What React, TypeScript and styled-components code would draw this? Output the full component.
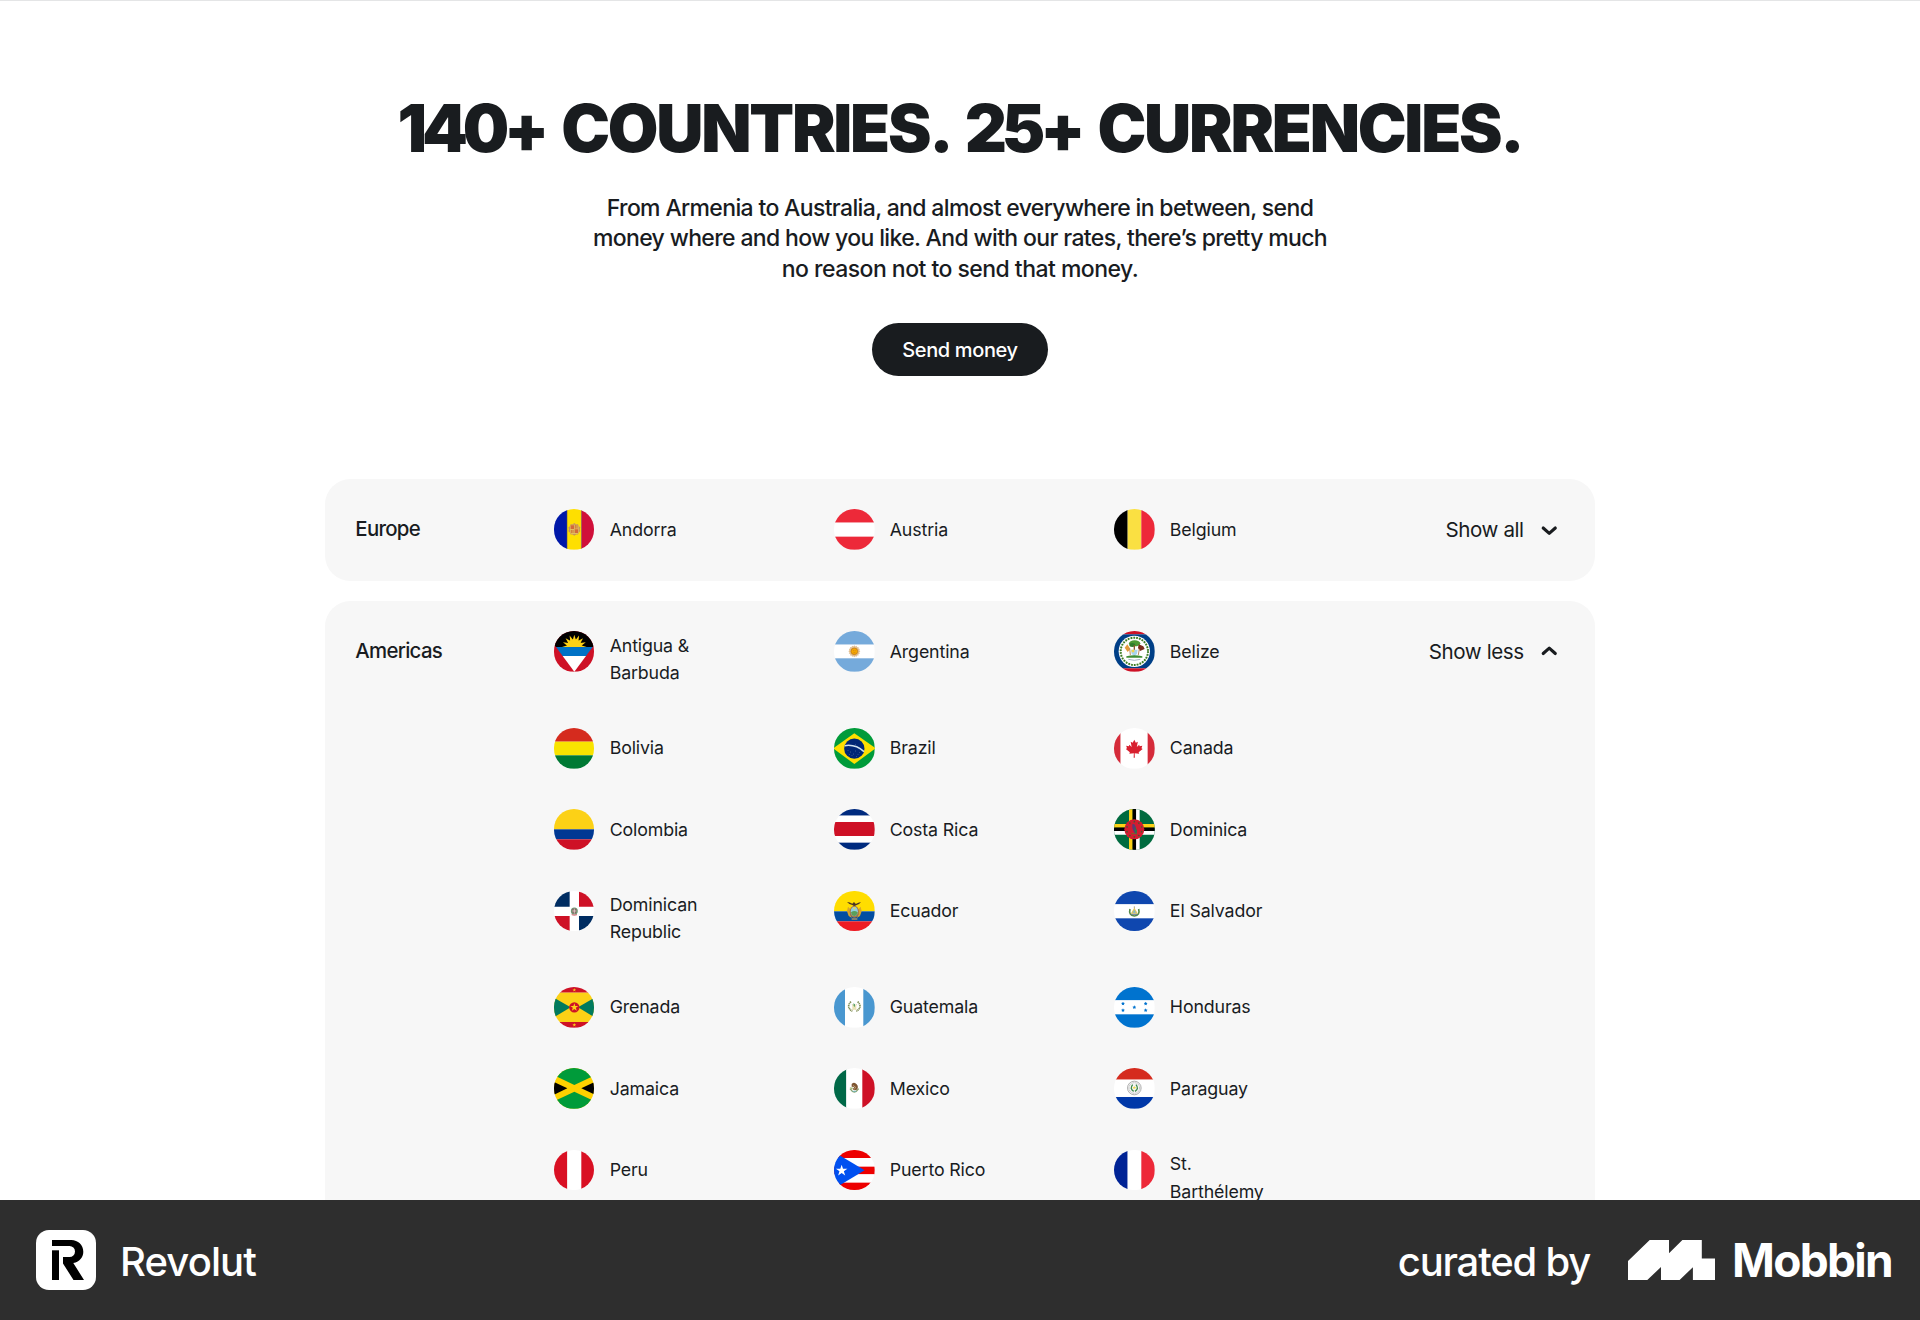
import React from 'react';
import styled, { createGlobalStyle } from 'styled-components';

const GlobalStyle = createGlobalStyle`
  *, *::before, *::after { box-sizing: border-box; }
  body { margin: 0; background: #fff; color: #191c1f; font-family: Inter, "Liberation Sans", sans-serif; }
  h1, h2, p, ul { margin: 0; padding: 0; }
`;

const Page = styled.div`
  display: flex;
  flex-direction: column;
  width: 1920px;
  height: 1320px;
  overflow: hidden;
`;

const Main = styled.main`
  flex: 1;
  min-height: 0;
  overflow: hidden;
  display: flex;
  flex-direction: column;
  align-items: center;
  border-top: 1px solid #e4e5e6;
`;

const Title = styled.h1`
  margin-top: 88px;
  font-size: 65.4px;
  line-height: 80px;
  font-weight: 900;
  letter-spacing: -2.25px;
  word-spacing: 6.3px;
  white-space: nowrap;
`;

const Figure = styled.span`
  letter-spacing: -5.2px;
`;

const Lead = styled.p`
  margin-top: 23.6px;
  text-align: center;
  font-size: 23px;
  line-height: 30.5px;
  font-weight: 500;
`;

const LeadLine = styled.span<{ $spacing: number }>`
  display: block;
  letter-spacing: ${(p) => p.$spacing}px;
`;

const SendButton = styled.button`
  margin-top: 39.4px;
  width: 176.5px;
  height: 53px;
  flex-shrink: 0;
  border: 0;
  border-radius: 27px;
  background: #191c1f;
  color: #fff;
  font: 500 20px/53px Inter, "Liberation Sans", sans-serif;
  letter-spacing: -0.36px;
  padding: 1px 0 0;
`;

const Regions = styled.div`
  margin-top: 102.5px;
  width: 1269.4px;
  display: flex;
  flex-direction: column;
  gap: 20.3px;
`;

const Card = styled.section<{ $open?: boolean }>`
  display: grid;
  grid-template-columns: 198px 1fr auto;
  align-items: start;
  flex-shrink: 0;
  min-height: ${(p) => (p.$open ? '760px' : '101.6px')};
  padding: 30.5px;
  border-radius: 25.4px;
  background: #f7f7f7;
`;

const RegionName = styled.h2`
  font-size: 20.4px;
  font-weight: 500;
  line-height: 40.6px;
  letter-spacing: -0.7px;
  margin-left: -0.5px;
`;

const CountryGrid = styled.ul`
  display: grid;
  grid-template-columns: repeat(3, 280.1px);
  row-gap: 40.67px;
  width: 800px;
  list-style: none;
`;

const Country = styled.li`
  display: flex;
  gap: 15.2px;
  align-items: flex-start;
`;

const FlagSvg = styled.svg`
  width: 40.67px;
  height: 40.67px;
  flex-shrink: 0;
  border-radius: 50%;
  display: block;
`;

const CountryName = styled.span`
  display: flex;
  align-items: center;
  width: 112px;
  min-height: 40.67px;
  font-size: 17.8px;
  line-height: 27.8px;
  letter-spacing: -0.14px;
  padding-top: 0.2px;
`;

const Toggle = styled.button`
  display: flex;
  align-items: center;
  gap: 10px;
  height: 40.6px;
  padding: 0;
  border: 0;
  background: none;
  color: #191c1f;
  font: 400 20.6px/40px Inter, "Liberation Sans", sans-serif;
  letter-spacing: -0.42px;
  white-space: nowrap;
`;

const ChevronSvg = styled.svg<{ $up?: boolean }>`
  width: 30.5px;
  height: 30.5px;
  transform: ${(p) => (p.$up ? 'rotate(180deg)' : 'none')};
`;

const Footer = styled.footer`
  height: 120px;
  flex-shrink: 0;
  display: flex;
  align-items: center;
  justify-content: space-between;
  padding: 0 28px 0 36px;
  background: #2e2e2e;
  color: #fff;
`;

const Brand = styled.div`
  display: flex;
  align-items: center;
`;

const AppTile = styled.svg`
  width: 60px;
  height: 60px;
  margin-right: 24px;
`;

const BrandName = styled.span<{ $spacing: number }>`
  font-size: 40px;
  line-height: 60px;
  font-weight: 500;
  letter-spacing: ${(p) => p.$spacing}px;
  padding-top: 3px;
`;

const MobbinMark = styled.svg`
  width: 87px;
  height: 40px;
  margin: 0 17px 0 38px;
`;

const MobbinName = styled.span`
  font-size: 46px;
  line-height: 60px;
  font-weight: 700;
  letter-spacing: -1.7px;
`;

/* Flags share a 122-unit square and are clipped to a circle by FlagSvg. */
const Bars = ({ colors, stops, vertical }: { colors: string[]; stops: number[]; vertical?: boolean }) => (
  <>
    {colors.map((c, i) => {
      const a = i === 0 ? 0 : stops[i - 1];
      const b = i === colors.length - 1 ? 122 : stops[i];
      return vertical ? (
        <rect key={i} x={a} y={0} width={b - a} height={122} fill={c} />
      ) : (
        <rect key={i} x={0} y={a} width={122} height={b - a} fill={c} />
      );
    })}
  </>
);

const starPoints = (cx: number, cy: number, r: number, n = 5, inner = 0.382) =>
  Array.from({ length: n * 2 }, (_, i) => {
    const rad = i % 2 ? r * inner : r;
    const a = (Math.PI * i) / n - Math.PI / 2;
    return `${(cx + rad * Math.cos(a)).toFixed(2)},${(cy + rad * Math.sin(a)).toFixed(2)}`;
  }).join(' ');

const Star = ({ x, y, r, fill, n, inner }: { x: number; y: number; r: number; fill: string; n?: number; inner?: number }) => (
  <polygon points={starPoints(x, y, r, n, inner)} fill={fill} />
);

const flags: Record<string, React.ReactNode> = {
  Andorra: (
    <>
      <Bars vertical colors={['#0018a8', '#fedf00', '#d0103a']} stops={[39, 82]} />
      <path d="M39.5 0V122M82.5 0V122" stroke="#7b6a50" strokeWidth="1.6" />
      <Star x={61} y={61} r={19} n={10} inner={0.86} fill="#c7955a" />
      <rect x="48" y="47" width="26" height="28" rx="6" fill="#e0bd62" />
      <path d="M50 49h10v11H50zM62 61h10v11H62z" fill="#d2683a" />
      <path d="M64 48v11M69 48v11M52 63v9M57 63v9" stroke="#c8501f" strokeWidth="2" />
    </>
  ),
  Austria: <Bars colors={['#ed2939', '#fff', '#ed2939']} stops={[41, 83]} />,
  Belgium: <Bars vertical colors={['#000', '#fae042', '#ed2939']} stops={[41, 82]} />,
  'Antigua & Barbuda': (
    <>
      <rect width="122" height="122" fill="#ce1126" />
      <polygon points="0,0 122,0 122,42 116,48 6,48 0,42" fill="#000" />
      <g transform="translate(61 48)">
        <circle r="23" fill="#fcd116" />
        {[-90, -67.5, -45, -22.5, 0, 22.5, 45, 67.5, 90].map((a) => (
          <polygon key={a} points="-5,-20 0,-37 5,-20" fill="#fcd116" transform={`rotate(${a})`} />
        ))}
      </g>
      <polygon points="6,48 116,48 96,75 26,75" fill="#0072c6" />
      <polygon points="26,75 96,75 61,122" fill="#fff" />
    </>
  ),
  Argentina: (
    <>
      <Bars colors={['#75aadb', '#fff', '#75aadb']} stops={[41, 82]} />
      <Star x={61} y={61} r={18} n={16} inner={0.82} fill="#e2bf90" />
      <circle cx="61" cy="61" r="10" fill="#f6a800" stroke="#b8711f" strokeWidth="2" />
      <path d="M57 59h3M62 59h3M58 65h6" stroke="#b8711f" strokeWidth="1.5" />
    </>
  ),
  Belize: (
    <>
      <Bars colors={['#ce1126', '#003f87', '#ce1126']} stops={[10, 112]} />
      <circle cx="61" cy="61" r="47" fill="#fff" />
      <circle cx="61" cy="61" r="41" fill="none" stroke="#b9d6ae" strokeWidth="2" />
      <circle cx="61" cy="61" r="41" fill="none" stroke="#3c7a22" strokeWidth="6" strokeDasharray="5 3.6" />
      <ellipse cx="62" cy="37" rx="17" ry="9" fill="#4d9a35" />
      <ellipse cx="55" cy="42" rx="9" ry="6" fill="#2f7d2c" />
      <path d="M61 42v18" stroke="#8b5a2b" strokeWidth="4" />
      <path d="M32 50l8-10 9 14-8 9z" fill="#e39b3b" />
      <path d="M74 40l14 6 4 8-14 6-6-9z" fill="#7b2c1c" />
      <path d="M47 52l2 20M76 54l-3 18" stroke="#b98a5e" strokeWidth="3" />
      <path d="M51 56h20l-2 13-8 6-8-6z" fill="#a9d5ee" />
      <path d="M53 56h8v8h-8z" fill="#f3d34a" />
      <path d="M37 76q24-7 48 0v4H37z" fill="#3f8e34" />
      <path d="M43 85q18 6 36 0" fill="none" stroke="#a8b4c0" strokeWidth="3" />
    </>
  ),
  Bolivia: <Bars colors={['#d52b1e', '#f9e300', '#007934']} stops={[41, 82]} />,
  Brazil: (
    <>
      <rect width="122" height="122" fill="#009b3a" />
      <polygon points="61,16 125,61 61,108 -3,61" fill="#fedf00" />
      <circle cx="61" cy="62" r="30.5" fill="#002776" />
      <path d="M32 53q33-5 58 18" fill="none" stroke="#cfe2ef" strokeWidth="4.5" />
      <g fill="#7f93bb">
        {[[42, 67], [50, 72], [58, 78], [65, 69], [72, 79], [54, 83], [46, 79], [76, 73], [68, 86], [65, 49]].map(([x, y]) => (
          <circle key={`${x}-${y}`} cx={x} cy={y} r="1.2" />
        ))}
      </g>
    </>
  ),
  Canada: (
    <>
      <Bars vertical colors={['#d52b3a', '#fff', '#d52b3a']} stops={[20, 101]} />
      <path
        fill="#d8202f"
        d="M61 35l-5 9.500-6-3 3 15.500-7-7-1.500 4.500-8-1.500 2.500 8-3.500 2 12 9.500-1.500 5 13.500-2-.5 14h3.500l-.5-14 13.500 2-1.500-5 12-9.500-3.500-2 2.500-8-8 1.500-1.500-4.500-7 7 3-15.500-6 3z"
      />
    </>
  ),
  Colombia: <Bars colors={['#fcd116', '#003893', '#ce1126']} stops={[61, 91]} />,
  'Costa Rica': <Bars colors={['#002b7f', '#fff', '#ce1126', '#fff', '#002b7f']} stops={[20, 39, 81, 101]} />,
  Dominica: (
    <>
      <rect width="122" height="122" fill="#006b3f" />
      <path d="M50.500 0V122M0 50.500H122" stroke="#fcd116" strokeWidth="11" />
      <path d="M71.500 0V122M0 71.500H122" stroke="#fff" strokeWidth="11" />
      <path d="M61 0V122M0 61H122" stroke="#000" strokeWidth="10.500" />
      <circle cx="61" cy="61" r="30" fill="#d41c30" />
      {Array.from({ length: 10 }, (_, i) => {
        const a = (i * Math.PI) / 5;
        return <Star key={i} x={61 + 23 * Math.sin(a)} y={61 - 23 * Math.cos(a)} r={4} fill="#38612f" />;
      })}
      <path d="M55 46q7-3 9 5l4 14-1 13-7-8-5-12z" fill="#5b3a78" />
      <path d="M63 52l6 14-2 10-5-10z" fill="#2b7a46" />
      <path d="M52 74h17" stroke="#5c7a2d" strokeWidth="2.500" />
    </>
  ),
  'Dominican Republic': (
    <>
      <rect width="122" height="122" fill="#fff" />
      <path d="M0 0H47V47H0zM75 75H122V122H75z" fill="#002d62" />
      <path d="M75 0H122V47H75zM0 75H47V122H0z" fill="#ce1126" />
      <circle cx="61" cy="60" r="10.500" fill="#6f9a76" />
      <path d="M55 53h12v11l-6 5-6-5z" fill="#8d5e63" />
      <path d="M61 53v15M55 60h12" stroke="#f0efe6" strokeWidth="2" />
      <path d="M53 71q8 3 16 0" fill="none" stroke="#c23645" strokeWidth="2.500" />
    </>
  ),
  Ecuador: (
    <>
      <Bars colors={['#fd0', '#034ea2', '#ed1c24']} stops={[61, 91]} />
      <path d="M39 33q9 1 16 5l4-4 4 1 2 4q8-5 16-6-5 7-13 9l-7 4-6-4q-9-1-16-9z" fill="#4a3425" />
      <path d="M42 47l9 9-2 15 5 10-10-6-5-14zM80 47l-9 9 2 15-5 10 10-6 5-14z" fill="#d7a52b" />
      <ellipse cx="61" cy="62" rx="14" ry="18" fill="#a7784d" />
      <ellipse cx="61" cy="61" rx="10.500" ry="14" fill="#8fcfe0" />
      <path d="M51 64q10-8 20 0-2 11-10 11t-10-11z" fill="#5aa05b" />
      <circle cx="61" cy="52" r="3.500" fill="#f7d744" />
      <path d="M53 84h17" stroke="#a89062" strokeWidth="5" />
    </>
  ),
  'El Salvador': (
    <>
      <Bars colors={['#0f47af', '#fff', '#0f47af']} stops={[40, 82]} />
      <path d="M48 54q-5 19 13 21 18-2 13-21" fill="none" stroke="#568a4a" strokeWidth="5" />
      <polygon points="61,50 72,68 50,68" fill="#e2c75a" />
      <polygon points="61,56 66,65 56,65" fill="#7eb6d6" />
      <path d="M52 70h18" stroke="#5c7894" strokeWidth="3" />
      <path d="M61 46v6" stroke="#937d3e" strokeWidth="2" />
    </>
  ),
  Grenada: (
    <>
      <Bars colors={['#ce1126', '#fcd116', '#ce1126']} stops={[17, 105]} />
      <polygon points="0,32 50,61 0,91" fill="#007a5e" />
      <polygon points="122,32 72,61 122,91" fill="#007a5e" />
      <circle cx="61" cy="61" r="15.500" fill="#ce1126" />
      <Star x={61} y={61} r={12.5} fill="#fcd116" />
      <Star x={61} y={9} r={6} fill="#fcd116" />
      <Star x={61} y={114} r={6} fill="#fcd116" />
    </>
  ),
  Guatemala: (
    <>
      <Bars vertical colors={['#4997d0', '#fff', '#4997d0']} stops={[33, 88]} />
      <path d="M51 44q-16 16 4 29M71 44q16 16-4 29" fill="none" stroke="#7f8f55" strokeWidth="5" strokeDasharray="4 1.500" />
      <path d="M54 51l14 20M68 51L54 71" stroke="#b9a778" strokeWidth="1.500" />
      <path d="M55 53h12v15H55z" fill="#e9e2b4" />
      <path d="M58 49l5 3v8l-4-3z" fill="#58a065" />
    </>
  ),
  Honduras: (
    <>
      <Bars colors={['#0073cf', '#fff', '#0073cf']} stops={[40, 82]} />
      {[[27, 50], [27, 70], [61, 61], [95, 50], [95, 70]].map(([x, y]) => (
        <Star key={`${x}-${y}`} x={x} y={y} r={6} inner={0.5} fill="#0073cf" />
      ))}
    </>
  ),
  Jamaica: (
    <>
      <rect width="122" height="122" fill="#fed100" />
      <polygon points="0,0 122,0 122,22 61,51 0,22" fill="#009b3a" />
      <polygon points="0,122 122,122 122,100 61,71 0,100" fill="#009b3a" />
      <polygon points="0,42 40,61 0,80" fill="#000" />
      <polygon points="122,42 82,61 122,80" fill="#000" />
    </>
  ),
  Mexico: (
    <>
      <Bars vertical colors={['#006847', '#fff', '#ce1126']} stops={[37, 85]} />
      <path d="M48 62q13 20 26 0" fill="none" stroke="#8ba26e" strokeWidth="4" />
      <path d="M53 48q8-8 15 1 6 6 2 15-7 5-14 0l5-7-8-1z" fill="#7d5532" />
      <path d="M47 58l11 1-5 6z" fill="#a8ba76" />
      <path d="M57 52l8 6-5 7" fill="none" stroke="#d5b88b" strokeWidth="2" />
      <path d="M56 70h11" stroke="#67b8c6" strokeWidth="2.500" />
    </>
  ),
  Paraguay: (
    <>
      <Bars colors={['#d52b1e', '#fff', '#0038a8']} stops={[35, 87]} />
      <circle cx="61" cy="60" r="20.500" fill="#f5f5f5" stroke="#8d8d8d" strokeWidth="2" />
      <circle cx="61" cy="60" r="16" fill="none" stroke="#b7b7b7" strokeWidth="3" strokeDasharray="3 2" />
      <path d="M56 50q-10 12 3 20M66 50q10 12-3 20" fill="none" stroke="#3f8a49" strokeWidth="4" />
      <Star x={61} y={59} r={6} fill="#eed84b" />
    </>
  ),
  Peru: <Bars vertical colors={['#d91023', '#fff', '#d91023']} stops={[40, 82]} />,
  'Puerto Rico': (
    <>
      <Bars colors={['#ed0000', '#fff', '#ed0000', '#fff', '#ed0000']} stops={[24, 50, 73, 98]} />
      <polygon points="0,6 92,61 0,116" fill="#0050f0" />
      <Star x={23} y={62} r={18} fill="#fff" />
    </>
  ),
  'St. Barthélemy': <Bars vertical colors={['#002395', '#fff', '#ed2939']} stops={[41, 82]} />,
};

const Chevron = ({ up }: { up?: boolean }) => (
  <ChevronSvg $up={up} viewBox="0 0 30.5 30.5" fill="none">
    <path d="M9.200 13L15.250 18.300L21.300 13" stroke="#191c1f" strokeWidth="3.1" strokeLinecap="round" strokeLinejoin="round" />
  </ChevronSvg>
);

const Region = ({ name, countries, open }: { name: string; countries: string[]; open?: boolean }) => (
  <Card $open={open}>
    <RegionName>{name}</RegionName>
    <CountryGrid>
      {countries.map((c) => (
        <Country key={c}>
          <FlagSvg viewBox="0 0 122 122">{flags[c]}</FlagSvg>
          <CountryName>{c}</CountryName>
        </Country>
      ))}
    </CountryGrid>
    <Toggle type="button">
      {open ? 'Show less' : 'Show all'}
      <Chevron up={open} />
    </Toggle>
  </Card>
);

const europe = ['Andorra', 'Austria', 'Belgium'];

const americas = [
  'Antigua & Barbuda', 'Argentina', 'Belize',
  'Bolivia', 'Brazil', 'Canada',
  'Colombia', 'Costa Rica', 'Dominica',
  'Dominican Republic', 'Ecuador', 'El Salvador',
  'Grenada', 'Guatemala', 'Honduras',
  'Jamaica', 'Mexico', 'Paraguay',
  'Peru', 'Puerto Rico', 'St. Barthélemy',
];

export default function App() {
  return (
    <>
      <GlobalStyle />
      <Page>
        <Main>
          <Title>
            <Figure>140+</Figure> COUNTRIES. <Figure>25+</Figure> CURRENCIES.
          </Title>
          <Lead>
            <LeadLine $spacing={-0.65}>From Armenia to Australia, and almost everywhere in between, send</LeadLine>
            <LeadLine $spacing={-0.64}>money where and how you like. And with our rates, there’s pretty much</LeadLine>
            <LeadLine $spacing={-0.53}>no reason not to send that money.</LeadLine>
          </Lead>
          <SendButton type="button">Send money</SendButton>
          <Regions>
            <Region name="Europe" countries={europe} />
            <Region name="Americas" countries={americas} open />
          </Regions>
        </Main>
        <Footer>
          <Brand>
            <AppTile viewBox="0 0 60 60">
              <rect width="60" height="60" rx="13" fill="#fff" />
              <path d="M16 10H35.300C42 10 47.300 15 47.300 21.700C47.300 27 44 31.600 37.300 33L48 50H37.500L27 33.500V27H33.500A5.500 5.500 0 0 0 33.500 16H16Z" fill="#000" />
              <rect x="16" y="20.300" width="7" height="29.700" fill="#000" />
            </AppTile>
            <BrandName $spacing={-0.9}>Revolut</BrandName>
          </Brand>
          <Brand>
            <BrandName $spacing={-1.2}>curated by</BrandName>
            <MobbinMark viewBox="0 0 87 40">
              <path d="M0 21L21.700 0H41V13.200L54.400 0H73.800V18.500H87V40H64.900V27.200L51.600 40H33V27L19.300 40H0Z" fill="#fff" />
            </MobbinMark>
            <MobbinName>Mobbin</MobbinName>
          </Brand>
        </Footer>
      </Page>
    </>
  );
}
